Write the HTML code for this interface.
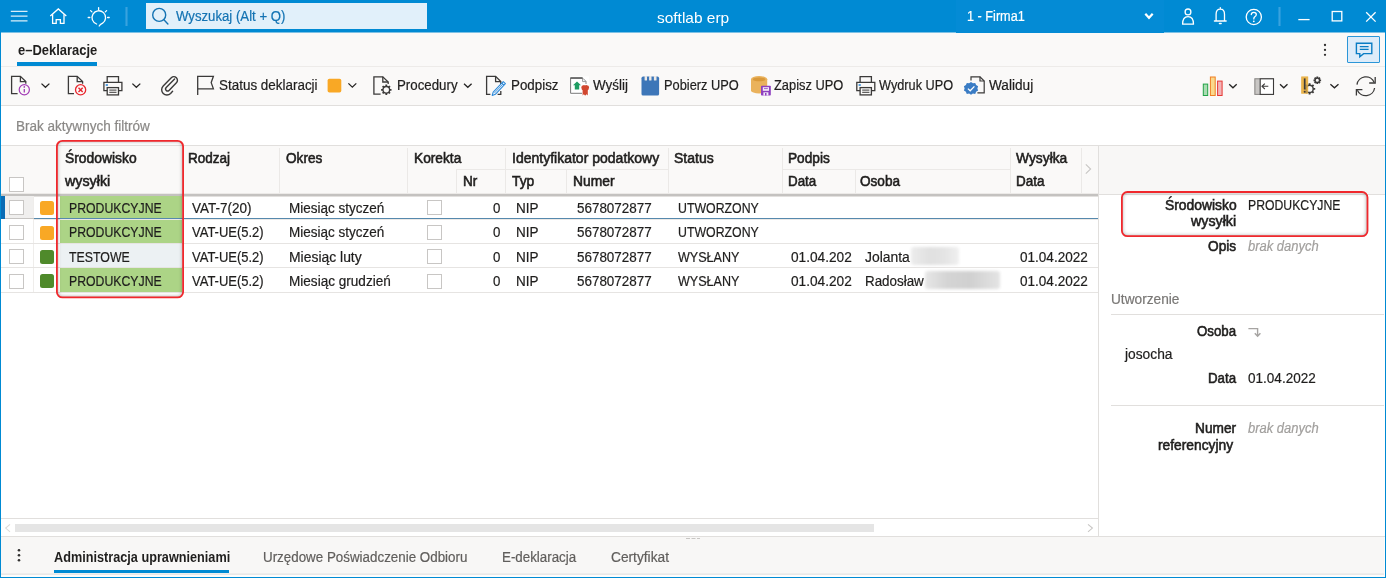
<!DOCTYPE html>
<html><head><meta charset="utf-8"><title>softlab erp</title>
<style>
html,body{margin:0;padding:0;background:#fff;}
body{width:1386px;height:578px;overflow:hidden;font-family:"Liberation Sans", sans-serif;}
#app{position:relative;width:1386px;height:578px;overflow:hidden;background:#fff;}
#app div,#app svg{position:absolute;}
.t{position:absolute;white-space:pre;line-height:20px;font-family:"Liberation Sans", sans-serif;transform-origin:0 0;}

.cb{width:13px;height:13px;background:#fff;border:1px solid #c8c6c4;box-sizing:content-box;}
.vl{width:1px;background:#e3e2e0;}
.hl{height:1px;background:#e3e2e0;}

</style></head><body><div id="app">
<div style="left:0px;top:0px;width:1386px;height:32px;background:#008ad3;"></div>
<div style="left:0px;top:32px;width:1386px;height:1px;background:#7dc1e5;"></div>
<div style="left:956px;top:0px;width:208px;height:33px;background:#048bd5;"></div>
<div style="left:146px;top:3px;width:281px;height:26px;background:#e1f0fa;"></div>
<div style="left:125px;top:7px;width:3px;height:19px;background:#1f97da;"></div>
<div style="left:126px;top:7px;width:1px;height:19px;background:#38a3de;"></div>
<div style="left:1278px;top:7px;width:3px;height:19px;background:#1f97da;"></div>
<div style="left:1279px;top:7px;width:1px;height:19px;background:#38a3de;"></div>
<div style="left:1px;top:33px;width:1384px;height:73px;background:#faf9f8;"></div>
<div style="left:1px;top:66px;width:1384px;height:1px;background:#edebe9;"></div>
<div style="left:1px;top:105px;width:1384px;height:1px;background:#e1dfdd;"></div>
<div style="left:17px;top:62px;width:80px;height:4px;background:#008ad3;"></div>
<div style="left:1347px;top:36px;width:33px;height:27px;background:#deecf9;border:1px solid #2b96d8;box-sizing:border-box;border-radius:1px;"></div>
<div style="left:1px;top:145px;width:1097px;height:49px;background:#faf9f8;"></div>
<div style="left:1px;top:145px;width:1384px;height:1px;background:#e1dfdd;"></div>
<div style="left:1px;top:194px;width:1097px;height:2px;background:#c4c2c0;"></div>
<div style="left:1px;top:193px;width:1097px;height:1px;background:#eceae8;"></div>
<div style="left:1px;top:196px;width:1097px;height:1px;background:#e2e0de;"></div>
<div style="left:1099px;top:146px;width:1285px;height:48px;background:#f8f7f6;"></div>
<div style="left:1099px;top:194px;width:1285px;height:1px;background:#e1dfdd;"></div>
<div style="left:1098px;top:145px;width:1px;height:392px;background:#e1dfdd;"></div>
<div style="left:183px;top:148px;width:1px;height:45px;background:#ebe9e7;"></div>
<div style="left:279px;top:148px;width:1px;height:45px;background:#ebe9e7;"></div>
<div style="left:407px;top:148px;width:1px;height:45px;background:#ebe9e7;"></div>
<div style="left:505px;top:148px;width:1px;height:45px;background:#ebe9e7;"></div>
<div style="left:668px;top:148px;width:1px;height:45px;background:#ebe9e7;"></div>
<div style="left:782px;top:148px;width:1px;height:45px;background:#ebe9e7;"></div>
<div style="left:1010px;top:148px;width:1px;height:45px;background:#ebe9e7;"></div>
<div style="left:1081px;top:148px;width:1px;height:45px;background:#ebe9e7;"></div>
<div style="left:456px;top:170px;width:1px;height:23px;background:#ebe9e7;"></div>
<div style="left:566px;top:170px;width:1px;height:23px;background:#ebe9e7;"></div>
<div style="left:855px;top:170px;width:1px;height:23px;background:#ebe9e7;"></div>
<div style="left:456px;top:169px;width:49px;height:1px;background:#ebe9e7;"></div>
<div style="left:505px;top:169px;width:163px;height:1px;background:#ebe9e7;"></div>
<div style="left:782px;top:169px;width:228px;height:1px;background:#ebe9e7;"></div>
<div class="cb" style="left:9px;top:177px;"></div>
<div style="left:5px;top:196px;width:29px;height:22px;background:#f0efee;"></div>
<div style="left:1px;top:218px;width:1097px;height:1px;background:#e6e4e2;"></div>
<div style="left:33px;top:196px;width:1px;height:22px;background:#efedeb;"></div>
<div style="left:60px;top:196px;width:122px;height:22px;background:#acd486;"></div>
<div class="cb" style="left:9px;top:200px;"></div>
<div style="left:40px;top:201px;width:14px;height:14px;background:#f9a825;border-radius:2.5px;"></div>
<div class="cb" style="left:427px;top:200px;"></div>
<div style="left:1px;top:243px;width:1097px;height:1px;background:#e6e4e2;"></div>
<div style="left:33px;top:219px;width:1px;height:24px;background:#efedeb;"></div>
<div style="left:60px;top:219px;width:122px;height:24px;background:#acd486;"></div>
<div class="cb" style="left:9px;top:225px;"></div>
<div style="left:40px;top:226px;width:14px;height:14px;background:#f9a825;border-radius:2.5px;"></div>
<div class="cb" style="left:427px;top:225px;"></div>
<div style="left:1px;top:267px;width:1097px;height:1px;background:#e6e4e2;"></div>
<div style="left:33px;top:244px;width:1px;height:23px;background:#efedeb;"></div>
<div style="left:60px;top:244px;width:122px;height:23px;background:#ecf1f3;"></div>
<div class="cb" style="left:9px;top:249px;"></div>
<div style="left:40px;top:250px;width:14px;height:14px;background:#4f8a2b;border-radius:2.5px;"></div>
<div class="cb" style="left:427px;top:249px;"></div>
<div style="left:1px;top:292px;width:1097px;height:1px;background:#e6e4e2;"></div>
<div style="left:33px;top:268px;width:1px;height:24px;background:#efedeb;"></div>
<div style="left:60px;top:268px;width:122px;height:24px;background:#acd486;"></div>
<div class="cb" style="left:9px;top:274px;"></div>
<div style="left:40px;top:274px;width:14px;height:14px;background:#4f8a2b;border-radius:2.5px;"></div>
<div class="cb" style="left:427px;top:274px;"></div>
<div style="left:1px;top:196px;width:4px;height:23px;background:#0a6cb5;"></div>
<div style="left:34px;top:218px;width:1064px;height:1px;background:#5689ad;"></div>
<div style="left:34px;top:219px;width:1064px;height:1px;background:#ebe9e7;"></div>
<div style="left:5px;top:218px;width:29px;height:1px;background:#c6c4c2;"></div>
<div style="left:911px;top:247px;width:48px;height:18px;background:linear-gradient(90deg,#ececec,#e0e0e0 40%,#e4e4e4 70%,#f0f0f0);border-radius:3px;filter:blur(1.5px);"></div>
<div style="left:925px;top:271px;width:75px;height:18px;background:linear-gradient(90deg,#e6e6e6,#d4d4d4 30%,#d0d0d0 60%,#e4e4e4);border-radius:3px;filter:blur(1.5px);"></div>
<div style="left:1px;top:518px;width:1097px;height:1px;background:#e1dfdd;"></div>
<div style="left:1px;top:536px;width:1384px;height:1px;background:#e1dfdd;"></div>
<div style="left:15px;top:524px;width:859px;height:8px;background:#e5e5e5;"></div>
<div style="left:1px;top:537px;width:1384px;height:40px;background:#f8f7f6;"></div>
<div style="left:54px;top:570px;width:175px;height:4px;background:#008ad3;"></div>
<div style="left:1px;top:573px;width:1383px;height:1px;background:#eeedec;"></div>
<div style="left:1px;top:574px;width:1383px;height:1px;background:#e9e8e7;"></div>
<div style="left:1px;top:575px;width:1384px;height:2px;background:#fdfdfc;"></div>
<div style="left:1384px;top:537px;width:1px;height:40px;background:#fdfdfc;"></div>
<div style="left:1111px;top:314px;width:273px;height:1px;background:#e1dfdd;"></div>
<div style="left:1111px;top:405px;width:273px;height:1px;background:#e1dfdd;"></div>
<div style="left:0px;top:0px;width:1px;height:578px;background:#008ad3;"></div>
<div style="left:1385px;top:0px;width:1px;height:578px;background:#008ad3;"></div>
<div style="left:0px;top:577px;width:1386px;height:1px;background:#008ad3;"></div>
<svg style="left:0;top:0" width="1386" height="578" viewBox="0 0 1386 578"><g stroke="#ffffff" stroke-width="1.3" stroke-opacity=".85" fill="none"><path d="M10.8 11.4H27.5M10.8 16.1H27.5M10.8 20.8H27.5"/></g>
<g stroke="#ffffff" stroke-width="1.3" fill="none" stroke-linejoin="miter"><path d="M50.3 15.9L58.3 8.9L66.3 15.9"/><path d="M52.6 14.2V23.3H56.2V19.6H60.4V23.3H64V14.2"/></g>
<g stroke="#ffffff" stroke-width="1.3" fill="none" stroke-linecap="round"><path d="M96.6 24A6.8 6.8 0 1 1 102.6 23.2Q100 24.4 99.2 26"/><path d="M98.6 7.6V9.4M90.6 10.6L91.9 11.9M106.6 10.6L105.3 11.9M88.2 17.5H89.8M107.6 17.5H109.2"/></g>
<g stroke="#1373b3" stroke-width="1.4" fill="none" stroke-linecap="round"><circle cx="159.2" cy="14.9" r="6.5"/><path d="M163.9 19.8L167.9 24"/></g>
<path d="M1145.3 13.8L1149.0 17.8L1152.7 13.8" fill="none" stroke="#ffffff" stroke-width="2.2" stroke-linejoin="miter"/>
<g stroke="#ffffff" stroke-width="1.3" fill="none"><circle cx="1188" cy="11.9" r="2.9"/><path d="M1182.6 24.2Q1182.6 16.6 1188 16.6Q1193.5 16.6 1193.5 24.2Z" stroke-linejoin="round"/></g>
<g stroke="#ffffff" stroke-width="1.3" fill="none" stroke-linecap="round"><path d="M1214.4 21H1226.2M1216.1 21V14.2Q1216.1 9.2 1220.3 9.2Q1224.5 9.2 1224.5 14.2V21M1219.4 23.5H1221.2M1220.3 7.6V9"/></g>
<g stroke="#ffffff" stroke-width="1.3" fill="none"><circle cx="1253.8" cy="17" r="7.6"/><path d="M1251.3 14.6Q1251.3 12.3 1253.8 12.3Q1256.3 12.3 1256.3 14.5Q1256.3 15.9 1254.8 16.8Q1253.8 17.5 1253.8 18.9" stroke-linecap="round"/></g><circle cx="1253.8" cy="21.3" r=".9" fill="#ffffff"/>
<g stroke="#ffffff" stroke-width="1.3" fill="none"><path d="M1298.3 19.6H1309.6"/><rect x="1332.2" y="11.5" width="9.6" height="9.4"/><path d="M1366.2 12.2L1375.6 21.6M1375.6 12.2L1366.2 21.6"/></g>
<g fill="#323130"><circle cx="1325" cy="45" r="1.15"/><circle cx="1325" cy="49.9" r="1.15"/><circle cx="1325" cy="54.8" r="1.15"/></g>
<g stroke="#0a7cc4" stroke-width="1.4" fill="none" stroke-linejoin="miter"><path d="M1356.4 43.2H1371.8V53.6H1363.6L1359.8 56.8V53.6H1356.4Z"/><path d="M1359.8 46.7H1368.6M1359.8 49.4H1368.6" stroke-width="1.3"/></g>
<g stroke="#3b3a39" stroke-width="1.3" fill="none" stroke-linejoin="miter"><path d="M17.6 93.6H11.6V76.4H20.4L25.8 81.6V83.8"/><path d="M20.4 76.4V81.6H25.8"/></g>
<g stroke="#a23bb5" fill="none"><circle cx="24.3" cy="89.8" r="5.1" stroke-width="1.2"/><path d="M24.3 88.9V92.6" stroke-width="1.3"/></g><circle cx="24.3" cy="86.9" r=".85" fill="#a23bb5"/>
<path d="M41.5 83.6L45.45 87.3L49.4 83.6" fill="none" stroke="#252423" stroke-width="1.3" stroke-linejoin="miter"/>
<g stroke="#3b3a39" stroke-width="1.3" fill="none" stroke-linejoin="miter"><path d="M74 93.6H68.4V76.4H77.2L82.6 81.6V83.8"/><path d="M77.2 76.4V81.6H82.6"/></g>
<g stroke="#e8262d" fill="none"><circle cx="80.6" cy="89.8" r="5.1" stroke-width="1.3"/><path d="M78.5 87.7L82.7 91.9M82.7 87.7L78.5 91.9" stroke-width="1.4"/></g>
<g stroke="#3b3a39" stroke-width="1.3" fill="none" stroke-linejoin="miter"><path d="M107.2 82.4V76.6H118.5V82.4"/><path d="M107.2 90.6H103.89999999999999V82.4H121.9V90.6H118.5"/><rect x="107.2" y="87.6" width="11.3" height="7.3"/><path d="M109.3 90.1H116.5M109.3 92.3H116.5" stroke-width="1"/></g><rect x="105.7" y="84.2" width="2.2" height="1.6" fill="#2b88d8"/>
<path d="M132.4 83.6L136.35000000000002 87.3L140.3 83.6" fill="none" stroke="#252423" stroke-width="1.3" stroke-linejoin="miter"/>
<path d="M174.6 81.2L166.2 89.8a1.9 1.9 0 0 0 2.8 2.8L176.4 85a3.6 3.6 0 0 0 -5.1 -5.1L163.2 88.2a5.2 5.2 0 0 0 7.4 7.4L172.6 93.4" transform="translate(0,-2.2)" fill="none" stroke="#3b3a39" stroke-width="1.4" stroke-linecap="round"/>
<path d="M197.7 95V76.3H213.4L211.2 82.6L213.4 88.9H197.7" fill="none" stroke="#3b3a39" stroke-width="1.3" stroke-linejoin="miter"/>
<rect x="327.6" y="78.8" width="13.7" height="13.7" rx="1.8" fill="#f9a825"/>
<path d="M348.4 83.39999999999999L352.35 87.1L356.3 83.39999999999999" fill="none" stroke="#252423" stroke-width="1.3" stroke-linejoin="miter"/>
<g stroke="#3b3a39" stroke-width="1.3" fill="none" stroke-linejoin="miter"><path d="M380.6 94.2H373.9V76.8H382.8L388.2 82V84"/><path d="M382.8 76.8V82H388.2"/></g>
<g stroke="#3b3a39" fill="none"><circle cx="386.3" cy="89.8" r="3.3" stroke-width="1.3"/><path d="M389.60 89.80L391.50 89.80M388.63 92.13L389.98 93.48M386.30 93.10L386.30 95.00M383.97 92.13L382.62 93.48M383.00 89.80L381.10 89.80M383.97 87.47L382.62 86.12M386.30 86.50L386.30 84.60M388.63 87.47L389.98 86.12" stroke-width="1.8"/></g>
<path d="M464 83.8L467.8 87.3L471.6 83.8" fill="none" stroke="#252423" stroke-width="1.3" stroke-linejoin="miter"/>
<g stroke="#3b3a39" stroke-width="1.3" fill="none" stroke-linejoin="miter"><path d="M490.4 94.3H486.6V76.4H495.6L500.8 81.6V84.2"/><path d="M495.6 76.4V81.6H500.8"/><path d="M497.6 94.3H500.8V91"/></g>
<g transform="translate(492.2,95.4) rotate(-46.5)"><path d="M0 0L3 -1.5H17.6V1.5H3Z" fill="#fff" stroke="#2b88d8" stroke-width="1.1" stroke-linejoin="round"/><path d="M3 0H15.6" stroke="#2b88d8" stroke-width=".8"/><path d="M15.6 -1.5V1.5" stroke="#2b88d8" stroke-width="1"/></g>
<rect x="570" y="76.4" width="19" height="19" fill="#fff"/>
<g fill="none" stroke="#7a7a7a" stroke-width="1"><path d="M570.6 78V93.3H582"/><path d="M586 84V81.4L583 78.4H571" stroke="#8a8a8a"/><path d="M582.6 78.4V81.6H586" stroke="#9a9a9a"/></g><path d="M570.3 77.9H582.6" stroke="#555" stroke-width="1.4"/>
<path d="M577 81.6L581 85.2H579.2V89.6H574.8V85.2H573Z" fill="#1f9d63"/>
<path d="M581.6 86.6Q581.6 85.3 583 85.4Q583.6 84.6 584.4 85.2H586Q586.8 84.6 587.4 85.4Q588.8 85.3 588.8 86.6Q589.4 87.6 588.8 88.6Q588.9 89.9 587.8 90.2V95.4L586.6 94.2L585.4 95.4H585L583.8 94.2L582.6 95.4V90.2Q581.5 89.9 581.6 88.6Q581 87.6 581.6 86.6Z" fill="#d1472f"/>
<rect x="641.5" y="76.6" width="17.6" height="19" rx="1.6" fill="#3d76b8"/>
<g fill="#ece9e6"><rect x="644.6" y="76" width="2.4" height="4.6" rx=".5"/><rect x="649.1" y="76" width="2.4" height="4.6" rx=".5"/><rect x="653.9" y="76" width="2.6" height="4.6" rx=".5"/></g>
<path d="M751 79.2V90.4A8.1 3 0 0 0 767.2 90.4V79.2Z" fill="#eab25c"/><ellipse cx="759.1" cy="79.2" rx="8.1" ry="3.1" fill="#eab25c"/><ellipse cx="759.1" cy="79.4" rx="6.3" ry="1.9" fill="#d9993a"/>
<rect x="761" y="85.7" width="9.8" height="9.8" rx=".8" fill="#8e3fbf"/><rect x="762.8" y="87.2" width="6.2" height="3.6" fill="#f3ebf8"/><path d="M764 88.6H767.8" stroke="#8e3fbf" stroke-width=".8"/><rect x="763.4" y="92.3" width="5" height="3.2" fill="#f3ebf8"/><rect x="765" y="93" width="1.5" height="2.5" fill="#8e3fbf"/>
<g stroke="#3b3a39" stroke-width="1.3" fill="none" stroke-linejoin="miter"><path d="M860.1 82.4V76.6H871.4000000000001V82.4"/><path d="M860.1 90.6H856.8000000000001V82.4H874.8000000000001V90.6H871.4000000000001"/><rect x="860.1" y="87.6" width="11.3" height="7.3"/><path d="M862.2 90.1H869.4000000000001M862.2 92.3H869.4000000000001" stroke-width="1"/></g><rect x="858.6" y="84.2" width="2.2" height="1.6" fill="#2b88d8"/>
<g stroke="#3b3a39" stroke-width="1.2" fill="none" stroke-linejoin="miter"><path d="M971 80.6V76.8H980L984.2 81V92.8H977.4"/><path d="M980 76.8V81H984.2"/></g>
<path d="M971 82L972.9 83.3L975.2 82.9L976.1 85L978.1 86.2L977.4 88.4L978.1 90.6L976.1 91.8L975.2 93.9L972.9 93.5L971 94.8L969.1 93.5L966.8 93.9L965.9 91.8L963.9 90.6L964.6 88.4L963.9 86.2L965.9 85L966.8 82.9L969.1 83.3Z" fill="#3a7cc4"/><path d="M967.9 88.6L970.2 90.8L974.4 86.4" fill="none" stroke="#fff" stroke-width="1.3"/>
<rect x="1203.3" y="84.1" width="4.4" height="11.4" fill="#a9dcb2" stroke="#22a347" stroke-width="1"/><rect x="1210.4" y="77" width="4.8" height="18.5" fill="#fad98c" stroke="#ef7f23" stroke-width="1"/><rect x="1217.6" y="81.1" width="4.5" height="14.4" fill="#f3b5b7" stroke="#e53935" stroke-width="1"/>
<path d="M1229.2 84.3L1232.95 87.8L1236.7 84.3" fill="none" stroke="#252423" stroke-width="1.3" stroke-linejoin="miter"/>
<rect x="1254.4" y="78.3" width="5.6" height="16.4" fill="#c8c6c4"/><rect x="1254.9" y="78.8" width="18.6" height="15.6" fill="none" stroke="#8a8886" stroke-width="1"/><rect x="1260.2" y="78.8" width="13.3" height="15.6" fill="#fff" stroke="#3b3a39" stroke-width="1.1"/><path d="M1262 86.3H1268.3M1264.8 83.6L1262 86.3L1264.8 89" fill="none" stroke="#3b3a39" stroke-width="1.1"/>
<path d="M1280 84.3L1283.75 87.8L1287.5 84.3" fill="none" stroke="#252423" stroke-width="1.3" stroke-linejoin="miter"/>
<rect x="1301.3" y="76.6" width="6.8" height="17" fill="#e9b44c"/>
<g stroke="#3b3a39" fill="none"><circle cx="1309.6" cy="88.9" r="3.6" stroke-width="1.4"/><path d="M1313.20 88.90L1315.20 88.90M1312.15 91.45L1313.56 92.86M1309.60 92.50L1309.60 94.50M1307.05 91.45L1305.64 92.86M1306.00 88.90L1304.00 88.90M1307.05 86.35L1305.64 84.94M1309.60 85.30L1309.60 83.30M1312.15 86.35L1313.56 84.94" stroke-width="1.9"/></g>
<rect x="1301.3" y="76.6" width="6.8" height="17" fill="#e9b44c" fill-opacity=".75"/>
<g stroke="#3b3a39" fill="none"><circle cx="1317.3" cy="80.3" r="2.2" stroke-width="1.3"/><path d="M1319.50 80.30L1321.10 80.30M1318.86 81.86L1319.99 82.99M1317.30 82.50L1317.30 84.10M1315.74 81.86L1314.61 82.99M1315.10 80.30L1313.50 80.30M1315.74 78.74L1314.61 77.61M1317.30 78.10L1317.30 76.50M1318.86 78.74L1319.99 77.61" stroke-width="1.8"/></g>
<path d="M1304.7 78.4V89.4" stroke="#3b3a39" stroke-width="1.7"/><circle cx="1304.7" cy="91.8" r="1" fill="#3b3a39"/>
<path d="M1330.4 84.3L1334.45 87.8L1338.5 84.3" fill="none" stroke="#252423" stroke-width="1.3" stroke-linejoin="miter"/>
<g fill="none" stroke="#3b3a39" stroke-width="1.3" stroke-linejoin="miter"><path d="M1357 84.6A9 9 0 0 1 1374.2 82.4"/><path d="M1375.2 77V83H1369.2"/><path d="M1374.6 88A9 9 0 0 1 1357.4 90.2"/><path d="M1356.4 95.6V89.6H1362.4"/></g>
<path d="M1085.8 164.4L1090.6 169L1085.8 173.6" fill="none" stroke="#c8c6c4" stroke-width="1.1"/>
<path d="M10 524.4L5.7 528.1L10 531.8" fill="none" stroke="#dcdad8" stroke-width="1.1"/>
<path d="M1088 524.4L1092.4 528.1L1088 531.8" fill="none" stroke="#c8c6c4" stroke-width="1.1"/>
<path d="M1248.4 328.6H1257.6V335.4M1254.8 333.2L1257.6 336.2L1260.4 333.2" fill="none" stroke="#a6a4a2" stroke-width="1.4"/>
<g fill="#323130"><circle cx="19" cy="550.2" r="1.3"/><circle cx="19" cy="555.3" r="1.3"/><circle cx="19" cy="560.3" r="1.3"/></g>
<path d="M686 538.5H690M691.5 538.5H695.5M697 538.5H700" stroke="#c8c6c4" stroke-width="1"/></svg>
<div id="tx" style="left:0;top:0;width:1386px;height:578px;transform:translateZ(0);">
<span class="t" style="left:175.70px;top:7.00px;font-size:13.8px;color:#1373b3;-webkit-text-stroke:0.2px #1373b3;transform:scaleX(0.9555);">Wyszukaj (Alt + Q)</span>
<span class="t" style="left:657.00px;top:8.00px;font-size:15px;color:#ffffff;transform:scaleX(1.0307);">softlab erp</span>
<span class="t" style="left:966.70px;top:7.00px;font-size:13.8px;color:#ffffff;-webkit-text-stroke:0.2px #ffffff;transform:scaleX(0.9193);">1 - Firma1</span>
<span class="t" style="left:17.50px;top:41.00px;font-size:13.8px;color:#201f1e;font-weight:700;transform:scaleX(0.9385);">e–Deklaracje</span>
<span class="t" style="left:218.90px;top:76.00px;font-size:13.8px;color:#1f1e1d;-webkit-text-stroke:0.2px #1f1e1d;transform:scaleX(0.9740);">Status deklaracji</span>
<span class="t" style="left:397.20px;top:76.00px;font-size:13.8px;color:#1f1e1d;-webkit-text-stroke:0.2px #1f1e1d;transform:scaleX(0.9636);">Procedury</span>
<span class="t" style="left:510.60px;top:76.00px;font-size:13.8px;color:#1f1e1d;-webkit-text-stroke:0.2px #1f1e1d;transform:scaleX(0.9675);">Podpisz</span>
<span class="t" style="left:593.40px;top:76.00px;font-size:13.8px;color:#1f1e1d;-webkit-text-stroke:0.2px #1f1e1d;transform:scaleX(0.9720);">Wyślij</span>
<span class="t" style="left:663.90px;top:76.00px;font-size:13.8px;color:#1f1e1d;-webkit-text-stroke:0.2px #1f1e1d;transform:scaleX(0.9290);">Pobierz UPO</span>
<span class="t" style="left:774.20px;top:76.00px;font-size:13.8px;color:#1f1e1d;-webkit-text-stroke:0.2px #1f1e1d;transform:scaleX(0.9318);">Zapisz UPO</span>
<span class="t" style="left:879.10px;top:76.00px;font-size:13.8px;color:#1f1e1d;-webkit-text-stroke:0.2px #1f1e1d;transform:scaleX(0.9219);">Wydruk UPO</span>
<span class="t" style="left:988.70px;top:76.00px;font-size:13.8px;color:#1f1e1d;-webkit-text-stroke:0.2px #1f1e1d;transform:scaleX(0.9881);">Waliduj</span>
<span class="t" style="left:15.70px;top:117.00px;font-size:13.8px;color:#8a8886;-webkit-text-stroke:0.2px #8a8886;transform:scaleX(0.9803);">Brak aktywnych filtrów</span>
<span class="t" style="left:65.30px;top:149.00px;font-size:13.8px;color:#1f1e1d;-webkit-text-stroke:0.55px #1f1e1d;transform:scaleX(1.0038);">Środowisko</span>
<span class="t" style="left:65.30px;top:172.00px;font-size:13.8px;color:#1f1e1d;-webkit-text-stroke:0.55px #1f1e1d;transform:scaleX(1.0343);">wysyłki</span>
<span class="t" style="left:187.90px;top:149.00px;font-size:13.8px;color:#1f1e1d;-webkit-text-stroke:0.55px #1f1e1d;transform:scaleX(0.9801);">Rodzaj</span>
<span class="t" style="left:285.70px;top:149.00px;font-size:13.8px;color:#1f1e1d;-webkit-text-stroke:0.55px #1f1e1d;transform:scaleX(0.9865);">Okres</span>
<span class="t" style="left:413.70px;top:149.00px;font-size:13.8px;color:#1f1e1d;-webkit-text-stroke:0.55px #1f1e1d;transform:scaleX(0.9945);">Korekta</span>
<span class="t" style="left:462.70px;top:172.00px;font-size:13.8px;color:#1f1e1d;-webkit-text-stroke:0.55px #1f1e1d;transform:scaleX(0.9820);">Nr</span>
<span class="t" style="left:511.70px;top:149.00px;font-size:13.8px;color:#1f1e1d;-webkit-text-stroke:0.55px #1f1e1d;transform:scaleX(1.0155);">Identyfikator podatkowy</span>
<span class="t" style="left:511.70px;top:172.00px;font-size:13.8px;color:#1f1e1d;-webkit-text-stroke:0.55px #1f1e1d;transform:scaleX(1.0022);">Typ</span>
<span class="t" style="left:572.50px;top:172.00px;font-size:13.8px;color:#1f1e1d;-webkit-text-stroke:0.55px #1f1e1d;transform:scaleX(1.0023);">Numer</span>
<span class="t" style="left:674.30px;top:149.00px;font-size:13.8px;color:#1f1e1d;-webkit-text-stroke:0.55px #1f1e1d;transform:scaleX(1.0147);">Status</span>
<span class="t" style="left:787.70px;top:149.00px;font-size:13.8px;color:#1f1e1d;-webkit-text-stroke:0.55px #1f1e1d;transform:scaleX(0.9908);">Podpis</span>
<span class="t" style="left:787.70px;top:172.00px;font-size:13.8px;color:#1f1e1d;-webkit-text-stroke:0.55px #1f1e1d;transform:scaleX(0.9706);">Data</span>
<span class="t" style="left:860.00px;top:172.00px;font-size:13.8px;color:#1f1e1d;-webkit-text-stroke:0.55px #1f1e1d;transform:scaleX(0.9839);">Osoba</span>
<span class="t" style="left:1016.00px;top:149.00px;font-size:13.8px;color:#1f1e1d;-webkit-text-stroke:0.55px #1f1e1d;transform:scaleX(1.0013);">Wysyłka</span>
<span class="t" style="left:1016.00px;top:172.00px;font-size:13.8px;color:#1f1e1d;-webkit-text-stroke:0.55px #1f1e1d;transform:scaleX(0.9775);">Data</span>
<span class="t" style="left:69.20px;top:199.00px;font-size:13.8px;color:#1f1e1d;-webkit-text-stroke:0.2px #1f1e1d;transform:scaleX(0.8891);">PRODUKCYJNE</span>
<span class="t" style="left:191.60px;top:199.00px;font-size:13.8px;color:#1f1e1d;-webkit-text-stroke:0.2px #1f1e1d;transform:scaleX(0.9798);">VAT-7(20)</span>
<span class="t" style="left:289.30px;top:199.00px;font-size:13.8px;color:#1f1e1d;-webkit-text-stroke:0.2px #1f1e1d;transform:scaleX(0.9777);">Miesiąc styczeń</span>
<span class="t" style="left:677.70px;top:199.00px;font-size:13.8px;color:#1f1e1d;-webkit-text-stroke:0.2px #1f1e1d;transform:scaleX(0.8934);">UTWORZONY</span>
<span class="t" style="left:493.10px;top:199.00px;font-size:13.8px;color:#1f1e1d;-webkit-text-stroke:0.2px #1f1e1d;transform:scaleX(0.9626);">0</span>
<span class="t" style="left:515.50px;top:199.00px;font-size:13.8px;color:#1f1e1d;-webkit-text-stroke:0.2px #1f1e1d;transform:scaleX(0.9783);">NIP</span>
<span class="t" style="left:576.50px;top:199.00px;font-size:13.8px;color:#1f1e1d;-webkit-text-stroke:0.2px #1f1e1d;transform:scaleX(0.9722);">5678072877</span>
<span class="t" style="left:69.20px;top:223.00px;font-size:13.8px;color:#1f1e1d;-webkit-text-stroke:0.2px #1f1e1d;transform:scaleX(0.8891);">PRODUKCYJNE</span>
<span class="t" style="left:191.60px;top:223.00px;font-size:13.8px;color:#1f1e1d;-webkit-text-stroke:0.2px #1f1e1d;transform:scaleX(0.9402);">VAT-UE(5.2)</span>
<span class="t" style="left:289.30px;top:223.00px;font-size:13.8px;color:#1f1e1d;-webkit-text-stroke:0.2px #1f1e1d;transform:scaleX(0.9777);">Miesiąc styczeń</span>
<span class="t" style="left:677.70px;top:223.00px;font-size:13.8px;color:#1f1e1d;-webkit-text-stroke:0.2px #1f1e1d;transform:scaleX(0.8934);">UTWORZONY</span>
<span class="t" style="left:493.10px;top:223.00px;font-size:13.8px;color:#1f1e1d;-webkit-text-stroke:0.2px #1f1e1d;transform:scaleX(0.9626);">0</span>
<span class="t" style="left:515.50px;top:223.00px;font-size:13.8px;color:#1f1e1d;-webkit-text-stroke:0.2px #1f1e1d;transform:scaleX(0.9783);">NIP</span>
<span class="t" style="left:576.50px;top:223.00px;font-size:13.8px;color:#1f1e1d;-webkit-text-stroke:0.2px #1f1e1d;transform:scaleX(0.9722);">5678072877</span>
<span class="t" style="left:69.20px;top:248.00px;font-size:13.8px;color:#1f1e1d;-webkit-text-stroke:0.2px #1f1e1d;transform:scaleX(0.8945);">TESTOWE</span>
<span class="t" style="left:191.60px;top:248.00px;font-size:13.8px;color:#1f1e1d;-webkit-text-stroke:0.2px #1f1e1d;transform:scaleX(0.9402);">VAT-UE(5.2)</span>
<span class="t" style="left:289.30px;top:248.00px;font-size:13.8px;color:#1f1e1d;-webkit-text-stroke:0.2px #1f1e1d;transform:scaleX(1.0086);">Miesiąc luty</span>
<span class="t" style="left:677.70px;top:248.00px;font-size:13.8px;color:#1f1e1d;-webkit-text-stroke:0.2px #1f1e1d;transform:scaleX(0.9086);">WYSŁANY</span>
<span class="t" style="left:790.70px;top:248.00px;font-size:13.8px;color:#1f1e1d;-webkit-text-stroke:0.2px #1f1e1d;transform:scaleX(0.9904);">01.04.202</span>
<span class="t" style="left:864.70px;top:248.00px;font-size:13.8px;color:#1f1e1d;-webkit-text-stroke:0.2px #1f1e1d;transform:scaleX(1.0067);">Jolanta</span>
<span class="t" style="left:1019.70px;top:248.00px;font-size:13.8px;color:#1f1e1d;-webkit-text-stroke:0.2px #1f1e1d;transform:scaleX(0.9817);">01.04.2022</span>
<span class="t" style="left:493.10px;top:248.00px;font-size:13.8px;color:#1f1e1d;-webkit-text-stroke:0.2px #1f1e1d;transform:scaleX(0.9626);">0</span>
<span class="t" style="left:515.50px;top:248.00px;font-size:13.8px;color:#1f1e1d;-webkit-text-stroke:0.2px #1f1e1d;transform:scaleX(0.9783);">NIP</span>
<span class="t" style="left:576.50px;top:248.00px;font-size:13.8px;color:#1f1e1d;-webkit-text-stroke:0.2px #1f1e1d;transform:scaleX(0.9722);">5678072877</span>
<span class="t" style="left:69.20px;top:272.00px;font-size:13.8px;color:#1f1e1d;-webkit-text-stroke:0.2px #1f1e1d;transform:scaleX(0.8891);">PRODUKCYJNE</span>
<span class="t" style="left:191.60px;top:272.00px;font-size:13.8px;color:#1f1e1d;-webkit-text-stroke:0.2px #1f1e1d;transform:scaleX(0.9402);">VAT-UE(5.2)</span>
<span class="t" style="left:289.30px;top:272.00px;font-size:13.8px;color:#1f1e1d;-webkit-text-stroke:0.2px #1f1e1d;transform:scaleX(0.9833);">Miesiąc grudzień</span>
<span class="t" style="left:677.70px;top:272.00px;font-size:13.8px;color:#1f1e1d;-webkit-text-stroke:0.2px #1f1e1d;transform:scaleX(0.9086);">WYSŁANY</span>
<span class="t" style="left:790.70px;top:272.00px;font-size:13.8px;color:#1f1e1d;-webkit-text-stroke:0.2px #1f1e1d;transform:scaleX(0.9904);">01.04.202</span>
<span class="t" style="left:864.70px;top:272.00px;font-size:13.8px;color:#1f1e1d;-webkit-text-stroke:0.2px #1f1e1d;transform:scaleX(0.9704);">Radosław</span>
<span class="t" style="left:1019.70px;top:272.00px;font-size:13.8px;color:#1f1e1d;-webkit-text-stroke:0.2px #1f1e1d;transform:scaleX(0.9817);">01.04.2022</span>
<span class="t" style="left:493.10px;top:272.00px;font-size:13.8px;color:#1f1e1d;-webkit-text-stroke:0.2px #1f1e1d;transform:scaleX(0.9626);">0</span>
<span class="t" style="left:515.50px;top:272.00px;font-size:13.8px;color:#1f1e1d;-webkit-text-stroke:0.2px #1f1e1d;transform:scaleX(0.9783);">NIP</span>
<span class="t" style="left:576.50px;top:272.00px;font-size:13.8px;color:#1f1e1d;-webkit-text-stroke:0.2px #1f1e1d;transform:scaleX(0.9722);">5678072877</span>
<span class="t" style="left:1164.60px;top:196.00px;font-size:13.8px;color:#1f1e1d;-webkit-text-stroke:0.55px #1f1e1d;transform:scaleX(1.0052);">Środowisko</span>
<span class="t" style="left:1191.20px;top:212.00px;font-size:13.8px;color:#1f1e1d;-webkit-text-stroke:0.55px #1f1e1d;transform:scaleX(1.0320);">wysyłki</span>
<span class="t" style="left:1248.30px;top:196.00px;font-size:13.8px;color:#1f1e1d;-webkit-text-stroke:0.2px #1f1e1d;transform:scaleX(0.8872);">PRODUKCYJNE</span>
<span class="t" style="left:1208.20px;top:237.00px;font-size:13.8px;color:#1f1e1d;-webkit-text-stroke:0.55px #1f1e1d;transform:scaleX(0.9903);">Opis</span>
<span class="t" style="left:1248.30px;top:237.00px;font-size:13.8px;color:#a19f9d;font-style:italic;-webkit-text-stroke:0.2px #a19f9d;transform:scaleX(0.9405);">brak danych</span>
<span class="t" style="left:1111.10px;top:290.00px;font-size:13.8px;color:#797775;-webkit-text-stroke:0.2px #797775;transform:scaleX(0.9911);">Utworzenie</span>
<span class="t" style="left:1197.20px;top:322.00px;font-size:13.8px;color:#1f1e1d;-webkit-text-stroke:0.55px #1f1e1d;transform:scaleX(0.9617);">Osoba</span>
<span class="t" style="left:1125.30px;top:345.00px;font-size:13.8px;color:#1f1e1d;-webkit-text-stroke:0.2px #1f1e1d;transform:scaleX(0.9987);">josocha</span>
<span class="t" style="left:1208.20px;top:369.00px;font-size:13.8px;color:#1f1e1d;-webkit-text-stroke:0.55px #1f1e1d;transform:scaleX(0.9638);">Data</span>
<span class="t" style="left:1248.30px;top:369.00px;font-size:13.8px;color:#1f1e1d;-webkit-text-stroke:0.2px #1f1e1d;transform:scaleX(0.9817);">01.04.2022</span>
<span class="t" style="left:1195.20px;top:419.00px;font-size:13.8px;color:#1f1e1d;-webkit-text-stroke:0.55px #1f1e1d;transform:scaleX(0.9926);">Numer</span>
<span class="t" style="left:1157.60px;top:436.00px;font-size:13.8px;color:#1f1e1d;-webkit-text-stroke:0.55px #1f1e1d;transform:scaleX(0.9993);">referencyjny</span>
<span class="t" style="left:1248.30px;top:419.00px;font-size:13.8px;color:#a19f9d;font-style:italic;-webkit-text-stroke:0.2px #a19f9d;transform:scaleX(0.9405);">brak danych</span>
<span class="t" style="left:53.70px;top:548.00px;font-size:13.8px;color:#201f1e;font-weight:700;transform:scaleX(0.9192);">Administracja uprawnieniami</span>
<span class="t" style="left:263.30px;top:548.00px;font-size:13.8px;color:#605e5c;-webkit-text-stroke:0.2px #605e5c;transform:scaleX(0.9692);">Urzędowe Poświadczenie Odbioru</span>
<span class="t" style="left:502.20px;top:548.00px;font-size:13.8px;color:#605e5c;-webkit-text-stroke:0.2px #605e5c;transform:scaleX(0.9663);">E-deklaracja</span>
<span class="t" style="left:610.70px;top:548.00px;font-size:13.8px;color:#605e5c;-webkit-text-stroke:0.2px #605e5c;transform:scaleX(0.9952);">Certyfikat</span>
</div>

<div style="left:57px;top:141px;width:126px;height:156px;border-radius:5px;box-shadow:inset 0 0 4px rgba(0,0,0,.42);"></div>
<div style="left:1122px;top:192px;width:245px;height:44px;border-radius:5px;box-shadow:inset 0 0 4px rgba(0,0,0,.42);"></div>
<svg style="left:0;top:0" width="1386" height="578" viewBox="0 0 1386 578"><g fill="none" stroke="#f0282d" stroke-width="1.8"><rect x="56.9" y="140.9" width="126.2" height="156.5" rx="5.5"/><rect x="1121.9" y="192" width="245.6" height="44.2" rx="5.5"/></g></svg>

</div></body></html>
